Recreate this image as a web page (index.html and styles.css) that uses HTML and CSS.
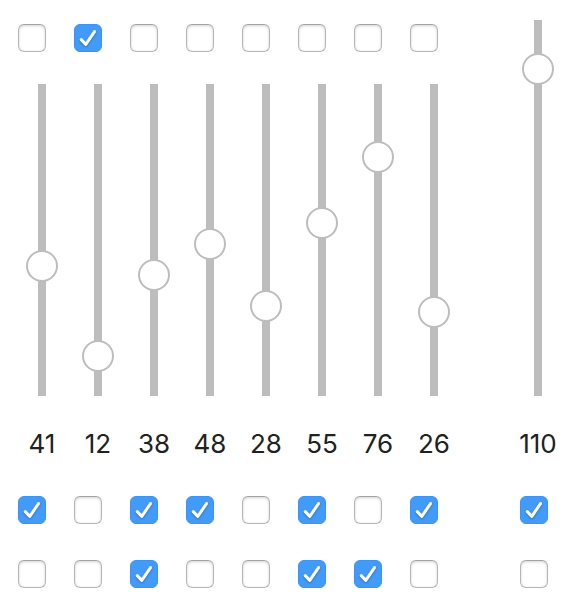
FILE: index.html
```html
<!DOCTYPE html>
<html lang="en">
<head>
<meta charset="utf-8">
<meta name="viewport" content="width=device-width, initial-scale=1">
<title>Mixer</title>
<link rel="stylesheet" href="styles.css">
</head>
<body>
<svg class="sprite" aria-hidden="true">
  <symbol id="tick" viewBox="0 0 28 28"><path d="M7.3 15.6 L11.8 20.4 L20.5 7.6"/></symbol>
</svg>
<main class="mixer">
  <div class="channels">
    <section class="strip">
      <label class="toggle"><input type="checkbox" aria-label="Channel 1 top"><svg><use href="#tick"/></svg></label>
      <div class="fader"><input id="f1" type="range" max="100" value="41" aria-label="Channel 1 level"></div>
      <output class="level" for="f1">41</output>
      <label class="toggle"><input type="checkbox" aria-label="Channel 1 middle" checked><svg><use href="#tick"/></svg></label>
      <label class="toggle"><input type="checkbox" aria-label="Channel 1 bottom"><svg><use href="#tick"/></svg></label>
    </section>
    <section class="strip">
      <label class="toggle"><input type="checkbox" aria-label="Channel 2 top" checked><svg><use href="#tick"/></svg></label>
      <div class="fader"><input id="f2" type="range" max="100" value="12" aria-label="Channel 2 level"></div>
      <output class="level" for="f2">12</output>
      <label class="toggle"><input type="checkbox" aria-label="Channel 2 middle"><svg><use href="#tick"/></svg></label>
      <label class="toggle"><input type="checkbox" aria-label="Channel 2 bottom"><svg><use href="#tick"/></svg></label>
    </section>
    <section class="strip">
      <label class="toggle"><input type="checkbox" aria-label="Channel 3 top"><svg><use href="#tick"/></svg></label>
      <div class="fader"><input id="f3" type="range" max="100" value="38" aria-label="Channel 3 level"></div>
      <output class="level" for="f3">38</output>
      <label class="toggle"><input type="checkbox" aria-label="Channel 3 middle" checked><svg><use href="#tick"/></svg></label>
      <label class="toggle"><input type="checkbox" aria-label="Channel 3 bottom" checked><svg><use href="#tick"/></svg></label>
    </section>
    <section class="strip">
      <label class="toggle"><input type="checkbox" aria-label="Channel 4 top"><svg><use href="#tick"/></svg></label>
      <div class="fader"><input id="f4" type="range" max="100" value="48" aria-label="Channel 4 level"></div>
      <output class="level" for="f4">48</output>
      <label class="toggle"><input type="checkbox" aria-label="Channel 4 middle" checked><svg><use href="#tick"/></svg></label>
      <label class="toggle"><input type="checkbox" aria-label="Channel 4 bottom"><svg><use href="#tick"/></svg></label>
    </section>
    <section class="strip">
      <label class="toggle"><input type="checkbox" aria-label="Channel 5 top"><svg><use href="#tick"/></svg></label>
      <div class="fader"><input id="f5" type="range" max="100" value="28" aria-label="Channel 5 level"></div>
      <output class="level" for="f5">28</output>
      <label class="toggle"><input type="checkbox" aria-label="Channel 5 middle"><svg><use href="#tick"/></svg></label>
      <label class="toggle"><input type="checkbox" aria-label="Channel 5 bottom"><svg><use href="#tick"/></svg></label>
    </section>
    <section class="strip">
      <label class="toggle"><input type="checkbox" aria-label="Channel 6 top"><svg><use href="#tick"/></svg></label>
      <div class="fader"><input id="f6" type="range" max="100" value="55" aria-label="Channel 6 level"></div>
      <output class="level" for="f6">55</output>
      <label class="toggle"><input type="checkbox" aria-label="Channel 6 middle" checked><svg><use href="#tick"/></svg></label>
      <label class="toggle"><input type="checkbox" aria-label="Channel 6 bottom" checked><svg><use href="#tick"/></svg></label>
    </section>
    <section class="strip">
      <label class="toggle"><input type="checkbox" aria-label="Channel 7 top"><svg><use href="#tick"/></svg></label>
      <div class="fader"><input id="f7" type="range" max="100" value="76" aria-label="Channel 7 level"></div>
      <output class="level" for="f7">76</output>
      <label class="toggle"><input type="checkbox" aria-label="Channel 7 middle"><svg><use href="#tick"/></svg></label>
      <label class="toggle"><input type="checkbox" aria-label="Channel 7 bottom" checked><svg><use href="#tick"/></svg></label>
    </section>
    <section class="strip">
      <label class="toggle"><input type="checkbox" aria-label="Channel 8 top"><svg><use href="#tick"/></svg></label>
      <div class="fader"><input id="f8" type="range" max="100" value="26" aria-label="Channel 8 level"></div>
      <output class="level" for="f8">26</output>
      <label class="toggle"><input type="checkbox" aria-label="Channel 8 middle" checked><svg><use href="#tick"/></svg></label>
      <label class="toggle"><input type="checkbox" aria-label="Channel 8 bottom"><svg><use href="#tick"/></svg></label>
    </section>
  </div>
  <section class="strip master">
    <div class="fader"><input id="fm" type="range" max="127" value="110" aria-label="Master level"></div>
    <output class="level" for="fm">110</output>
    <label class="toggle"><input type="checkbox" aria-label="Master middle" checked><svg><use href="#tick"/></svg></label>
    <label class="toggle"><input type="checkbox" aria-label="Master bottom"><svg><use href="#tick"/></svg></label>
  </section>
</main>
</body>
</html>
```

FILE: styles.css
```css
:root {
  --line: #bdbdbd;
  --accent: #429bf9;
  --fader-height: 312px;
}

* {
  box-sizing: border-box;
}

body {
  margin: 0;
  background: #fff;
  color: #212121;
  font-family: Inter, "Liberation Sans", sans-serif;
}

.sprite {
  display: none;
}

.mixer {
  display: flex;
  justify-content: space-between;
  align-items: flex-end;
  padding: 20px 20px 16px 14px;
}

.channels {
  display: flex;
}

.strip {
  display: flex;
  flex-direction: column;
  gap: 36px;
  width: 56px;
}

.master {
  --fader-height: 376px;
  width: 44px;
}

.toggle {
  display: grid;
  width: 28px;
  height: 28px;
  margin-left: 4px;
}

.toggle input,
.toggle svg {
  grid-area: 1 / 1;
  width: 28px;
  height: 28px;
  margin: 0;
}

.toggle input {
  appearance: none;
  border: 1px solid #b5b5b5;
  border-top-color: #a3a3a3;
  border-radius: 6px;
  background: #fff;
  box-shadow: inset 0 1px 3px #0000002e;
}

.toggle input:checked {
  border-color: #3b93f5;
  background: var(--accent);
  box-shadow: none;
}

.toggle svg {
  visibility: hidden;
  pointer-events: none;
  fill: none;
  stroke: #fff;
  stroke-width: 3;
  stroke-linecap: round;
  stroke-linejoin: round;
  filter: drop-shadow(0 1px 1px #00000047);
}

.toggle input:checked + svg {
  visibility: visible;
}

.fader {
  display: flex;
  justify-content: center;
  height: var(--fader-height);
  margin: -4px 0;
  background: linear-gradient(var(--line), var(--line)) center / 8px 100% no-repeat;
}

.master .fader {
  margin-top: 0;
}

/* The thumb may overhang both ends of the track */
.fader input {
  appearance: none;
  writing-mode: vertical-lr;
  direction: rtl;
  flex: none;
  width: 32px;
  height: calc(var(--fader-height) + 30px);
  margin: -17px 0 -13px;
  background: transparent;
}

.fader input::-webkit-slider-thumb {
  appearance: none;
  width: 32px;
  height: 32px;
  border: 2px solid var(--line);
  border-radius: 50%;
  background: #fff;
}

.level {
  align-self: center;
  font-size: 26px;
  line-height: 32px;
}
```
